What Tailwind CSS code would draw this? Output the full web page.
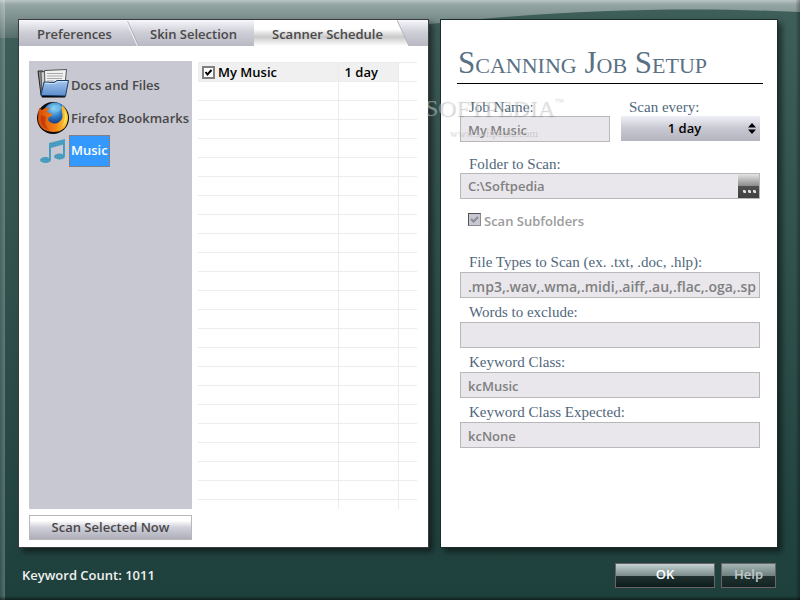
<!DOCTYPE html>
<html lang="en">
<head>
  <meta charset="UTF-8" />
  <meta name="viewport" content="width=device-width, initial-scale=1.0" />
  <title>Scanner Schedule</title>
  <script src="https://cdn.jsdelivr.net/npm/@tailwindcss/browser@4"></script>
</head>
<body class="font-['Open_Sans',sans-serif] text-[13px] font-semibold text-[#484848]">
  <div class="relative flex flex-col min-h-screen overflow-hidden bg-linear-to-b from-[#3f5f5b] to-[#1e403c]">
    <!-- window gloss and edges -->
    <svg class="absolute inset-x-0 top-0 w-full h-10" viewBox="0 0 800 40" preserveAspectRatio="none" aria-hidden="true">
      <defs>
        <linearGradient id="gloss" x1="0" y1="0" x2="0" y2="1">
          <stop offset="0" stop-color="#b9c5c4" />
          <stop offset="0.12" stop-color="#94a5a3" />
          <stop offset="0.5" stop-color="#7b8f8c" />
          <stop offset="1" stop-color="#566f6c" />
        </linearGradient>
      </defs>
      <path d="M0 0H800V12C690 7 570 9 440 23C300 37 150 38 0 38Z" fill="url(#gloss)" />
    </svg>
    <div class="absolute inset-y-0 left-0 w-[5px] bg-linear-to-r from-white/10 to-white/25"></div>
    <div class="absolute inset-y-0 right-0 w-1 bg-linear-to-r from-black/5 to-black/30"></div>
    <div class="absolute inset-x-0 bottom-0 h-1 bg-linear-to-b from-transparent to-black/50"></div>

    <main class="relative grid grow grid-cols-[411fr_338fr] gap-[11px] pt-[19px] pl-[18px] pr-[22px]">
      <section class="flex flex-col bg-white border border-[#3c3c40] shadow-[4px_4px_6px_rgba(0,0,0,0.5)]">
        <nav class="flex h-[26px] bg-linear-to-b from-[#f6f6fc] via-[#cdcdd6] to-[#b9b9c4]">
          <a href="#" class="flex items-center w-[107px] pl-[18px] pt-1">Preferences</a>
          <svg class="w-4 h-[26px]" viewBox="0 0 16 26" aria-hidden="true">
            <path d="M0.500 1.500L11.500 26" stroke="#f4f4f8" fill="none" />
            <path d="M1.500 1L12.500 25.500" stroke="#a6a6b0" stroke-width="0.700" fill="none" />
          </svg>
          <a href="#" class="flex items-center w-28 pl-2 pt-1 whitespace-nowrap">Skin Selection</a>
          <a href="#" aria-current="page" class="flex items-center justify-center w-[143px] pt-1 pl-1 bg-linear-to-b from-white from-35% via-[#c9c9c9] via-65% to-white">Scanner Schedule</a>
          <svg class="w-3 h-[26px]" viewBox="0 0 12 26" aria-hidden="true">
            <defs>
              <linearGradient id="tab" x1="0" y1="0" x2="0" y2="1">
                <stop offset="0.35" stop-color="#fff" />
                <stop offset="0.65" stop-color="#c9c9c9" />
                <stop offset="1" stop-color="#fff" />
              </linearGradient>
            </defs>
            <path d="M0 0L12 26H0Z" fill="url(#tab)" />
            <path d="M0 0L12 26" stroke="#b4b4bc" fill="none" />
          </svg>
        </nav>

        <div class="grid grow grid-cols-[163fr_219fr] gap-1.5 pt-[15px] pl-2.5 pr-[11px]">
          <ul class="bg-[#c8c8d2] pt-2 pl-2 space-y-px">
            <li class="flex items-center h-8">
              <svg class="w-8 h-8 shrink-0" viewBox="0 0 32 32" aria-hidden="true">
                <defs>
                  <linearGradient id="folder" x1="0" y1="0" x2="0" y2="1">
                    <stop offset="0" stop-color="#a4c6ee" />
                    <stop offset="1" stop-color="#5a8ccc" />
                  </linearGradient>
                </defs>
                <path d="M4 26H29L28 28.500H5Z" fill="#000" />
                <path d="M1 2H6L9 24L4 26Z" fill="#8c8c8c" stroke="#222" />
                <path d="M4 3L11 2L11 22L5 25Z" fill="#cfcfcf" stroke="#333" stroke-width="0.700" />
                <path d="M7.500 1.500L29.500 0.500L28 16L8 18Z" fill="#f1f1f1" stroke="#333" stroke-width="0.800" />
                <path d="M10 4.500H26M10 7H26M10 9.500H25M10 12H17" stroke="#a8a8a8" />
                <path d="M7 13L17 13.500L20 11.500L31.500 11.500L28.500 27L4 26.500Z" fill="url(#folder)" stroke="#1c3c66" />
                <path d="M8 14.200L17.500 14.700L20.500 12.700H30" stroke="#cfe2fa" fill="none" />
              </svg>
              <span class="px-0.5 pt-px">Docs and Files</span>
            </li>
            <li class="flex items-center h-8">
              <svg class="w-8 h-8 shrink-0" viewBox="0 0 32 32" aria-hidden="true">
                <defs>
                  <radialGradient id="globe" cx="0.45" cy="0.25" r="0.750">
                    <stop offset="0" stop-color="#8fdcf8" />
                    <stop offset="0.5" stop-color="#2a78c4" />
                    <stop offset="1" stop-color="#0b2068" />
                  </radialGradient>
                  <linearGradient id="fox" x1="0" y1="0" x2="1" y2="0">
                    <stop offset="0" stop-color="#d84a0c" />
                    <stop offset="0.6" stop-color="#f28414" />
                    <stop offset="1" stop-color="#ffd83c" />
                  </linearGradient>
                </defs>
                <circle cx="16" cy="16" r="16" fill="#0c0804" />
                <circle cx="18" cy="12.500" r="12" fill="url(#globe)" />
                <path d="M16 4L22 2L25 6L21 10L18 8Z" fill="#7cc6ee" opacity="0.6" />
                <path d="M2 6L5 8Q8 5 13 6Q10 8 10 10L15 12Q16 14 12 15Q10 18 13 20Q18 23 22 20Q27 17 25 10Q24 6 25 3Q31 9 31 16Q30 30 16 30Q2 29 1 17Q1 11 2 6Z" fill="url(#fox)" />
                <path d="M4 13Q2 25 12 28Q6 22 9 15Z" fill="#b83208" opacity="0.7" />
                <path d="M27 7Q32 17 25 25Q30 16 27 7Z" fill="#fff07a" />
              </svg>
              <span class="px-0.5 pt-px whitespace-nowrap">Firefox Bookmarks</span>
            </li>
            <li class="flex items-center h-8">
              <svg class="w-8 h-8 shrink-0" viewBox="0 0 32 32" aria-hidden="true">
                <defs>
                  <pattern id="dither" width="2" height="2" patternUnits="userSpaceOnUse">
                    <rect width="2" height="2" fill="#3399ff" />
                    <rect width="1" height="1" fill="#5a9a78" />
                    <rect x="1" y="1" width="1" height="1" fill="#62a488" />
                  </pattern>
                </defs>
                <g fill="url(#dither)">
                  <path d="M12 8L28 4V9L14 13V25H12Z" />
                  <path d="M26 5H28V21H26Z" />
                  <ellipse cx="8.500" cy="25" rx="5.500" ry="3" />
                  <ellipse cx="22.500" cy="21.500" rx="5.500" ry="3" />
                </g>
              </svg>
              <span class="flex items-center h-full px-px text-white bg-[#3399ff] border border-dotted border-[#c8661a]">Music</span>
            </li>
          </ul>

          <div class="h-[448px] pt-px overflow-hidden">
            <table class="w-full text-black border-collapse table-fixed">
              <colgroup>
                <col class="w-[140px]" />
                <col class="w-[60px]" />
                <col />
              </colgroup>
              <tbody id="jobs">
                <tr class="h-[19px] border-y border-[#ececec]">
                  <td class="p-0 bg-[#f0f0f0] border-r border-[#ececec]">
                    <label class="flex items-center h-[18px] gap-[3px] pl-1">
                      <input type="checkbox" checked class="appearance-none size-[13px] bg-white border-2 border-[#808080]" />
                      <svg class="absolute w-[13px] h-[13px] pointer-events-none" viewBox="0 0 13 13" aria-hidden="true">
                        <path d="M3.500 6L5.500 8.500L9.500 4" stroke="#000" stroke-width="2" fill="none" />
                      </svg>
                      <span class="pt-px">My Music</span>
                    </label>
                  </td>
                  <td class="p-0 pl-1.5 leading-[18px] bg-[#f0f0f0] border-r border-[#ececec]">1 day</td>
                  <td></td>
                </tr>
              </tbody>
            </table>
          </div>
        </div>

        <div class="pt-1.5 pb-[7px] pl-2.5">
          <button type="button" class="block w-[163px] h-[25px] pt-px border border-[#b8b8b8] bg-linear-to-b from-white from-20% via-[#d0d0da] via-50% to-[#aeaeb8]">Scan Selected Now</button>
        </div>
      </section>

      <form class="relative flex flex-col bg-white border border-[#1c2c2a] shadow-[4px_4px_6px_rgba(0,0,0,0.5)] pl-[19px] pr-[17px]">
        <h1 class="-mx-[3px] h-16 pt-[22px] pl-px mb-3 border-b border-black font-['Liberation_Serif',serif] font-normal text-[31px] leading-[42px] text-[#5a7084] [font-variant:small-caps] whitespace-nowrap">Scanning Job Setup</h1>
        <div class="grid grid-cols-[150fr_139fr] gap-[11px]">
          <div>
            <label for="name" class="block h-5 pt-px pl-[9px] font-['Liberation_Serif',serif] font-normal text-[15px] leading-5 text-[#50677c]">Job Name:</label>
            <input id="name" disabled value="My Music" class="block w-full h-[26px] px-[7px] pt-0.5 text-[#808080] bg-[#e9e7ec] border border-[#b8b8b8]" />
          </div>
          <div>
            <label for="every" class="block h-5 pt-px pl-2 font-['Liberation_Serif',serif] font-normal text-[15px] leading-5 text-[#50677c]">Scan every:</label>
            <div class="relative">
              <select id="every" class="block w-full h-[25px] pr-3 text-black appearance-none [text-align-last:center] bg-linear-to-b from-[#f0f0f8] via-[#c8c8d2] to-[#b4b4be]">
                <option>1 day</option>
              </select>
              <svg class="absolute right-1 top-[7px] w-[8px] h-[11px] pointer-events-none" viewBox="0 0 8 11" aria-hidden="true">
                <path d="M0 4.500L4 0L8 4.500ZM0 6.500L4 11L8 6.500Z" fill="#000" />
              </svg>
            </div>
          </div>
        </div>

        <label for="folder-path" class="block h-5 mt-[11px] pt-px pl-[9px] font-['Liberation_Serif',serif] font-normal text-[15px] leading-5 text-[#50677c]">Folder to Scan:</label>
        <div class="flex h-[26px] bg-[#e9e7ec] border border-[#b8b8b8]">
          <input id="folder-path" disabled value="C:\Softpedia" class="grow min-w-0 px-[7px] pt-0.5 text-[#808080]" />
          <button type="button" aria-label="Browse" class="flex items-end justify-center w-[21px] pb-[5px] pl-px bg-[linear-gradient(#e4e4e4,#8c8c8c_50%,#505050_50%,#404040)]">
            <svg class="w-[13px] h-[3px]" viewBox="0 0 13 3" aria-hidden="true">
              <path d="M0 0H2L3 1V3H1L0 2ZM5 0H7L8 1V3H6L5 2ZM10 0H12L13 1V3H11L10 2Z" fill="#ddd" />
            </svg>
          </button>
        </div>

        <label class="flex items-center h-5 gap-[3px] pl-2 mt-3 text-[#9c9c9c]">
          <input type="checkbox" checked disabled class="appearance-none size-[13px] mb-1 bg-[#c8c8d2] border border-[#8a8a90] border-t-[#505054] border-l-[#505054]" />
          <svg class="absolute w-[13px] h-[13px] mb-1 pointer-events-none" viewBox="0 0 13 13" aria-hidden="true">
            <path d="M3 6L5.500 8.500L10 4" stroke="#8c8c90" stroke-width="2" fill="none" />
          </svg>
          <span class="pt-0.5">Scan Subfolders</span>
        </label>

        <div class="mt-[21px] space-y-1">
          <div>
            <label for="types" class="block h-5 pl-[9px] font-['Liberation_Serif',serif] font-normal text-[15px] leading-5 text-[#50677c]">File Types to Scan (ex. .txt, .doc, .hlp):</label>
            <input id="types" disabled value=".mp3,.wav,.wma,.midi,.aiff,.au,.flac,.oga,.sp" class="block w-full h-[26px] pl-[7px] pt-0.5 text-[14px] text-[#808080] bg-[#e9e7ec] border border-[#b8b8b8]" />
          </div>
          <div>
            <label for="exclude" class="block h-5 pl-[9px] font-['Liberation_Serif',serif] font-normal text-[15px] leading-5 text-[#50677c]">Words to exclude:</label>
            <input id="exclude" disabled class="block w-full h-[26px] px-[7px] pt-0.5 text-[#808080] bg-[#e9e7ec] border border-[#b8b8b8]" />
          </div>
          <div>
            <label for="class" class="block h-5 pl-[9px] font-['Liberation_Serif',serif] font-normal text-[15px] leading-5 text-[#50677c]">Keyword Class:</label>
            <input id="class" disabled value="kcMusic" class="block w-full h-[26px] px-[7px] pt-0.5 text-[#808080] bg-[#e9e7ec] border border-[#b8b8b8]" />
          </div>
          <div>
            <label for="expected" class="block h-5 pl-[9px] font-['Liberation_Serif',serif] font-normal text-[15px] leading-5 text-[#50677c]">Keyword Class Expected:</label>
            <input id="expected" disabled value="kcNone" class="block w-full h-[26px] px-[7px] pt-0.5 text-[#808080] bg-[#e9e7ec] border border-[#b8b8b8]" />
          </div>
        </div>

        <div class="absolute top-[74px] -left-4 pointer-events-none font-['Liberation_Serif',serif] font-normal text-white/40 [text-shadow:1px_1px_1px_rgba(90,90,90,0.3)]">
          <p class="text-2xl leading-7 whitespace-nowrap">SOFTPEDIA<sup class="text-[9px] -top-3">™</sup></p>
          <p class="pl-6 text-[11px] leading-5">www.softpedia.com</p>
        </div>
      </form>
    </main>

    <footer class="relative flex items-center h-[52px] pt-0.5 pl-[22px] pr-6 text-[#f0f0f0]">
      <p class="pt-px mr-auto">Keyword Count: 1011</p>
      <button type="button" class="w-[100px] h-[25px] mr-1.5 border border-[#6c6468] text-white bg-[linear-gradient(#c4d2d2,#7c8e8c_50%,#223432_50%,#0c1c1a)]">OK</button>
      <button type="button" class="w-[55px] h-[25px] border border-[#6c6468] text-[#c0caca] bg-[linear-gradient(#a4b6b4,#70827f_50%,#223432_50%,#122422)]">Help</button>
    </footer>
  </div>

  <script>
    // empty rows fill the rest of the grid
    const emptyRow = `<tr class="h-[19px] border-b border-[#ececec]"><td class="p-0 border-r border-[#ececec]"></td><td class="p-0 border-r border-[#ececec]"></td><td></td></tr>`;
    document.getElementById("jobs").insertAdjacentHTML("beforeend", emptyRow.repeat(23));
  </script>
</body>
</html>
